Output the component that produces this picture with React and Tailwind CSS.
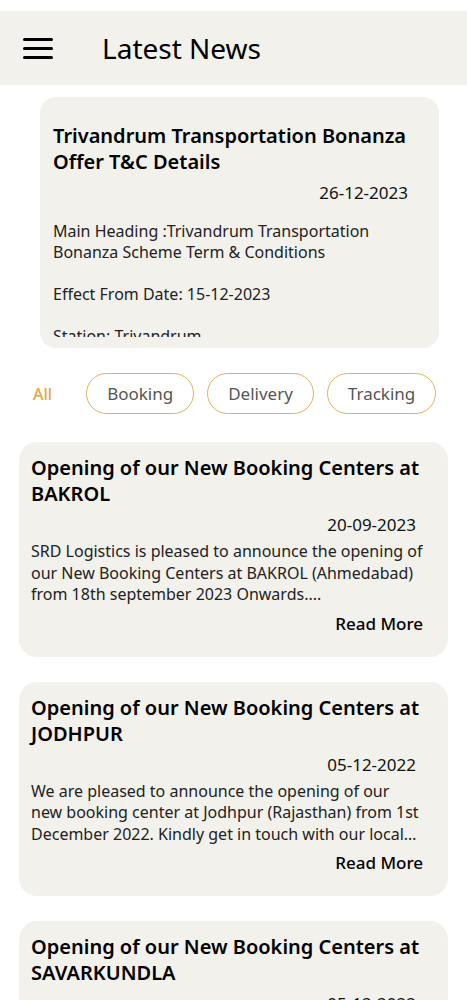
import React from 'react';

const news = [
  {
    id: 1,
    title: 'Opening of our New Booking Centers at BAKROL',
    date: '20-09-2023',
    body: 'SRD Logistics is pleased to announce the opening of our New Booking Centers at BAKROL (Ahmedabad) from 18th september 2023 Onwards....',
  },
  {
    id: 2,
    title: 'Opening of our New Booking Centers at JODHPUR',
    date: '05-12-2022',
    body: 'We are pleased to announce the opening of our new booking center at Jodhpur (Rajasthan) from 1st December 2022. Kindly get in touch with our local office for more details.',
  },
  {
    id: 3,
    title: 'Opening of our New Booking Centers at SAVARKUNDLA',
    date: '05-12-2022',
    body: 'We are pleased to announce the opening of our new booking center at Savarkundla (Gujarat). Kindly get in touch with our local office for more details.',
  },
];

const filters = ['Booking', 'Delivery', 'Tracking'];

function NewsCard({ item }) {
  return (
    <div className="bg-[#f2f1ec] rounded-[18px] pt-[13px] pb-[21px] pl-[12px] pr-[25px] mb-[25px]">
      <h2 className="text-[20px] leading-[26px] font-semibold text-black">{item.title}</h2>
      <p className="text-right text-[17px] leading-[24px] mt-[6px] pr-[7px] text-[#111]">{item.date}</p>
      <p className="text-[16px] leading-[21.5px] mt-[4px] text-[#222] line-clamp-3">{item.body}</p>
      <div className="text-right text-[17px] leading-[24px] font-medium mt-[6px] text-black">Read More</div>
    </div>
  );
}

export default function App() {
  return (
    <div className="min-h-screen bg-white pt-[11px]" style={{ fontFamily: '"Noto Sans", sans-serif' }}>
      <header className="bg-[#f2f1ec] h-[74px] flex items-center">
        <div className="w-[30px] ml-[23px] flex flex-col gap-[6px]">
          <span className="block h-[3px] bg-black rounded-full" />
          <span className="block h-[3px] bg-black rounded-full" />
          <span className="block h-[3px] bg-black rounded-full" />
        </div>
        <h1 className="ml-[49px] text-[28px] text-black">Latest News</h1>
      </header>

      <div className="ml-[40px] mr-[28px] mt-[12px] bg-[#f2f1ec] rounded-[16px] pl-[13px] pr-[31px] pt-[26px] pb-[11px]">
        <div className="h-[214px] overflow-hidden">
          <h2 className="text-[20px] leading-[26px] font-semibold text-black">
            Trivandrum Transportation Bonanza Offer T&amp;C Details
          </h2>
          <p className="text-right text-[17px] leading-[24px] mt-[6px] text-[#111]">26-12-2023</p>
          <div className="text-[16px] leading-[21px] mt-[16px] text-[#222]">
            <p>Main Heading :Trivandrum Transportation Bonanza Scheme Term &amp; Conditions</p>
            <p className="mt-[21px]">Effect From Date: 15-12-2023</p>
            <p className="mt-[21px]">Station: Trivandrum</p>
          </div>
        </div>
      </div>

      <div className="flex items-center mt-[25px] mb-[28px] pl-[33px]">
        <span className="text-[16px] text-[#e5a63c] font-medium mr-[34px]">All</span>
        <div className="flex gap-[13px]">
          {filters.map((f) => (
            <button
              key={f}
              className="h-[41px] px-[20px] rounded-full border-[1.5px] border-[#e5b05a] text-[17px] text-[#555]"
            >
              {f}
            </button>
          ))}
        </div>
      </div>

      <div className="px-[19px]">
        {news.map((item) => (
          <NewsCard key={item.id} item={item} />
        ))}
      </div>
    </div>
  );
}
